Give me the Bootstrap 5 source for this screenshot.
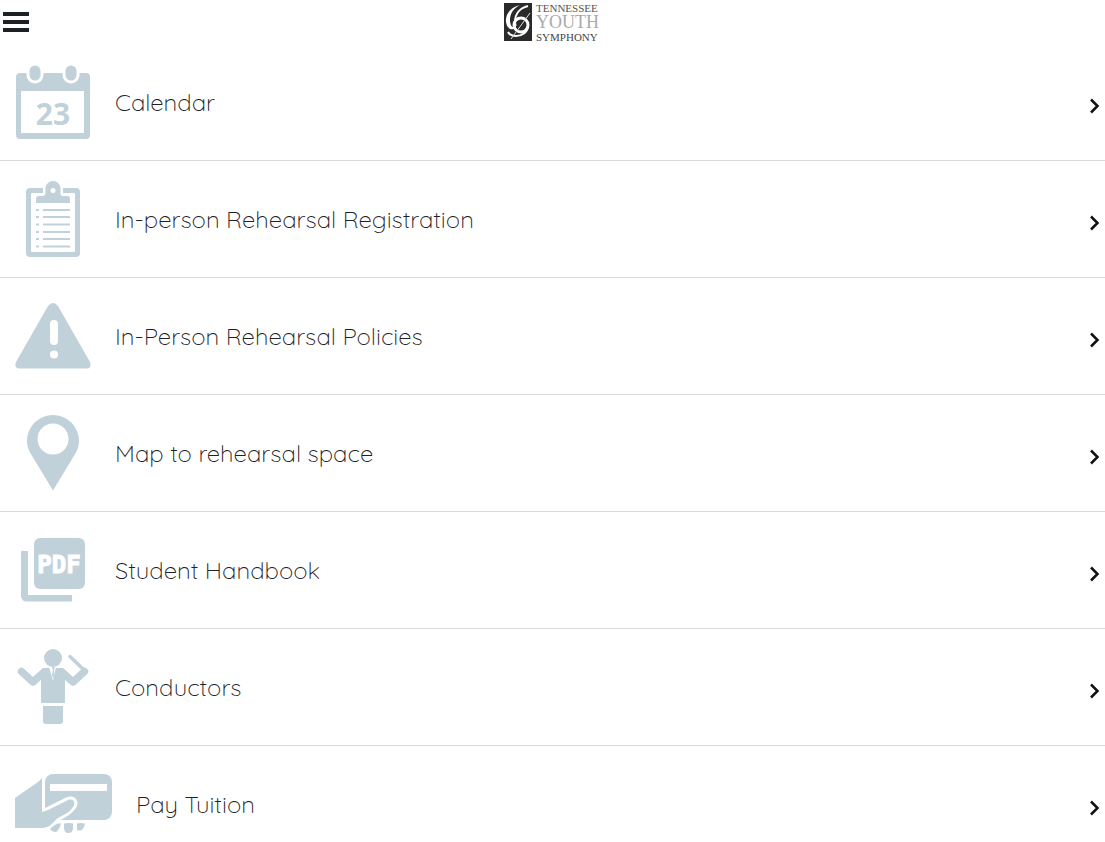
<!DOCTYPE html>
<html lang="en">
<head>
<meta charset="utf-8">
<meta name="viewport" content="width=device-width, initial-scale=1">
<title>Tennessee Youth Symphony</title>
<link href="https://cdn.jsdelivr.net/npm/bootstrap@5.3.0/dist/css/bootstrap.min.css" rel="stylesheet">
<style>
  body { background: #fff; color: #1b2125; font-family: Quicksand, Inter, sans-serif; }
  .topbar { height: 44px; }
  .menu-btn { left: 3px; top: 12px; line-height: 0; color: #1b2125; }
  .menu-row { --bs-list-group-border-color: #d9d9d9; --bs-list-group-color: #1b2125; border-width: 0 0 1px; padding: 20px 5px 20px 15px; gap: 24px; }
  .menu-text { font-size: 24px; line-height: 32px; font-weight: 300; }
  .pic { height: 76px; fill: #c1d1da; color: #c1d1da; }
  .chev { margin-top: 8px; }
</style>
</head>
<body>
<header class="topbar position-relative d-flex justify-content-center">
  <button type="button" class="menu-btn btn border-0 p-0 position-absolute" aria-label="Menu">
    <svg width="26" height="20" fill="currentColor"><path d="M0 0h26v4H0zM0 8h26v4H0zM0 16h26v4H0z"/></svg>
  </button>
  <a href="#" aria-label="Tennessee Youth Symphony" class="d-block">
    <svg class="d-block" width="97" height="44" viewBox="0 0 97 44">
      <rect y="3" width="28" height="38" fill="#2a2a2a"/>
      <path d="M16 5C7 7 1 14 2 22c1 7 6 9 10 6-4 0-6-3-6-8C6 13 10 8 16 5z" fill="#fff"/>
      <path d="M24 6C16 8 11 14 11 22c0 2 0 3 1 4" fill="none" stroke="#fff" stroke-width="2"/>
      <ellipse cx="17" cy="25" rx="7" ry="7" fill="none" stroke="#fff" stroke-width="3"/>
      <path d="M24 26c0 6-6 10-12 10-4 0-7-2-8-4" fill="none" stroke="#fff" stroke-width="2"/>
      <path d="M26 13L7 39" fill="none" stroke="#ddd"/>
      <g font-family="Liberation Serif, serif">
        <text x="32" y="12" font-size="11" fill="#555">TENNESSEE</text>
        <text x="32" y="28" font-size="18" fill="#aaa">YOUTH</text>
        <text x="32" y="41" font-size="11" fill="#444">SYMPHONY</text>
      </g>
    </svg>
  </a>
</header>
<main class="list-group list-group-flush">
  <a href="#" class="menu-row list-group-item list-group-item-action d-flex align-items-center">
    <svg class="pic" width="76" viewBox="0 0 76 76" aria-hidden="true">
      <rect x="1" y="9" width="74" height="66" rx="4"/>
      <path d="M6 27h63v42H6z" fill="#fff"/>
      <g stroke="#fff" stroke-width="3"><rect x="13" y="0" width="14" height="18" rx="7"/><rect x="49" y="0" width="14" height="18" rx="7"/></g>
      <text x="38" y="61" text-anchor="middle" font-family="Open Sans, sans-serif" font-weight="700" font-size="30">23</text>
    </svg>
    <span class="menu-text flex-grow-1">Calendar</span>
    <svg class="chev" width="11" height="16" fill="none" stroke="#111" stroke-width="2.500"><path d="M2 1.500l6.500 6.500L2 14.500"/></svg>
  </a>
  <a href="#" class="menu-row list-group-item list-group-item-action d-flex align-items-center">
    <svg class="pic" width="76" viewBox="0 0 76 76" aria-hidden="true">
      <rect x="11" y="7" width="54" height="69" rx="4"/>
      <rect x="16" y="12" width="44" height="59" rx="1" fill="#fff"/>
      <path d="M28 6h20v9H28z" fill="#fff"/>
      <path d="M21 22v-4q0-3 3-3h4q2 0 2.500-3V7.500a7.500 7.500 0 0 1 15 0V12q0 3 2 3H52q3 0 3 3v4z"/>
      <circle cx="38" cy="9.500" r="2.500" fill="#fff"/>
      <path d="M21 29h3m4 0h27M21 36h3m4 0h27M21 43.500h3m4 0h27M21 51h3m4 0h27M21 58h3m4 0h27M21 65.500h3m4 0h27" stroke="currentColor" stroke-width="2"/>
    </svg>
    <span class="menu-text flex-grow-1">In-person Rehearsal Registration</span>
    <svg class="chev" width="11" height="16" fill="none" stroke="#111" stroke-width="2.500"><path d="M2 1.500l6.500 6.500L2 14.500"/></svg>
  </a>
  <a href="#" class="menu-row list-group-item list-group-item-action d-flex align-items-center">
    <svg class="pic" width="76" viewBox="0 0 76 76" aria-hidden="true">
      <path d="M33 8q5-6 10 0l32 56q2 6-3 6.500H4Q-1 70 1 64z"/>
      <rect x="35" y="22" width="8" height="25" rx="4" fill="#fff"/><circle cx="39" cy="56.500" r="4" fill="#fff"/>
    </svg>
    <span class="menu-text flex-grow-1">In-Person Rehearsal Policies</span>
    <svg class="chev" width="11" height="16" fill="none" stroke="#111" stroke-width="2.500"><path d="M2 1.500l6.500 6.500L2 14.500"/></svg>
  </a>
  <a href="#" class="menu-row list-group-item list-group-item-action d-flex align-items-center">
    <svg class="pic" width="76" viewBox="0 0 76 76" aria-hidden="true">
      <path d="M38 75.500L15 37.500C12 32 12 27 12 26a26 26 0 0 1 52 0c0 1 0 6-3 11.500z"/>
      <circle cx="38" cy="24" r="15.500" fill="#fff"/>
    </svg>
    <span class="menu-text flex-grow-1">Map to rehearsal space</span>
    <svg class="chev" width="11" height="16" fill="none" stroke="#111" stroke-width="2.500"><path d="M2 1.500l6.500 6.500L2 14.500"/></svg>
  </a>
  <a href="#" class="menu-row list-group-item list-group-item-action d-flex align-items-center">
    <svg class="pic" width="76" viewBox="0 0 76 76" aria-hidden="true">
      <rect x="19" y="6" width="51" height="51" rx="6"/>
      <path d="M6 19h7v44h44v6.500H12q-6 0-6-6z"/>
      <text x="44" y="41" text-anchor="middle" font-family="DejaVu Sans Mono, monospace" font-weight="700" font-size="24" fill="#fff" stroke="#fff">PDF</text>
    </svg>
    <span class="menu-text flex-grow-1">Student Handbook</span>
    <svg class="chev" width="11" height="16" fill="none" stroke="#111" stroke-width="2.500"><path d="M2 1.500l6.500 6.500L2 14.500"/></svg>
  </a>
  <a href="#" class="menu-row list-group-item list-group-item-action d-flex align-items-center">
    <svg class="pic" width="76" viewBox="0 0 76 76" aria-hidden="true">
      <circle cx="38" cy="9" r="9"/>
      <path d="M26 21q1-2 4-2h16q3 0 4 2v33H26zM28 57h20v15q0 3-3 3H31q-3 0-3-3z"/>
      <path d="M6.500 22.500L18 33l11-10M47 23l11 10 11.500-10.500" fill="none" stroke="currentColor" stroke-width="7.500" stroke-linecap="round" stroke-linejoin="round"/>
      <path d="M55 7.500L69 21" stroke="currentColor" stroke-width="3.500" stroke-linecap="round"/>
      <path d="M34 18l4 14 3-14z" fill="#fff"/><path d="M37 18h3l-1 3 .5 5-1.500 4-1-4 1-5z"/>
    </svg>
    <span class="menu-text flex-grow-1">Conductors</span>
    <svg class="chev" width="11" height="16" fill="none" stroke="#111" stroke-width="2.500"><path d="M2 1.500l6.500 6.500L2 14.500"/></svg>
  </a>
  <a href="#" class="menu-row list-group-item list-group-item-action d-flex align-items-center">
    <svg class="pic" width="97" viewBox="0 0 97 76" aria-hidden="true">
      <rect x="30" y="8" width="67" height="46" rx="8"/>
      <path d="M35 18h57v7H35z" fill="#fff"/>
      <path d="M0 32L23 16q4-3 4-6v36q3-1 6-2l20-10c6-2 8 3 5 7-3 5-9 8-15 11-5 4-8 10-16 10L0 62z" stroke="#fff" stroke-width="6" stroke-linejoin="round"/>
      <path d="M0 32L23 16q4-3 4-6v36q3-1 6-2l20-10c6-2 8 3 5 7-3 5-9 8-15 11-5 4-8 10-16 10L0 62z"/>
      <path d="M35 63q5-5 8-5.500h3q-2 7-5 8.500-4 0-6-3zM49 57.500q5-1 9 0V62q0 5-4.500 5T49 62zM62 57.500q4-1 8 0-1 5-4 7h-4q0-3 0-7z"/>
    </svg>
    <span class="menu-text flex-grow-1">Pay Tuition</span>
    <svg class="chev" width="11" height="16" fill="none" stroke="#111" stroke-width="2.500"><path d="M2 1.500l6.500 6.500L2 14.500"/></svg>
  </a>
</main>
<script src="https://cdn.jsdelivr.net/npm/bootstrap@5.3.0/dist/js/bootstrap.bundle.min.js"></script>
</body>
</html>
